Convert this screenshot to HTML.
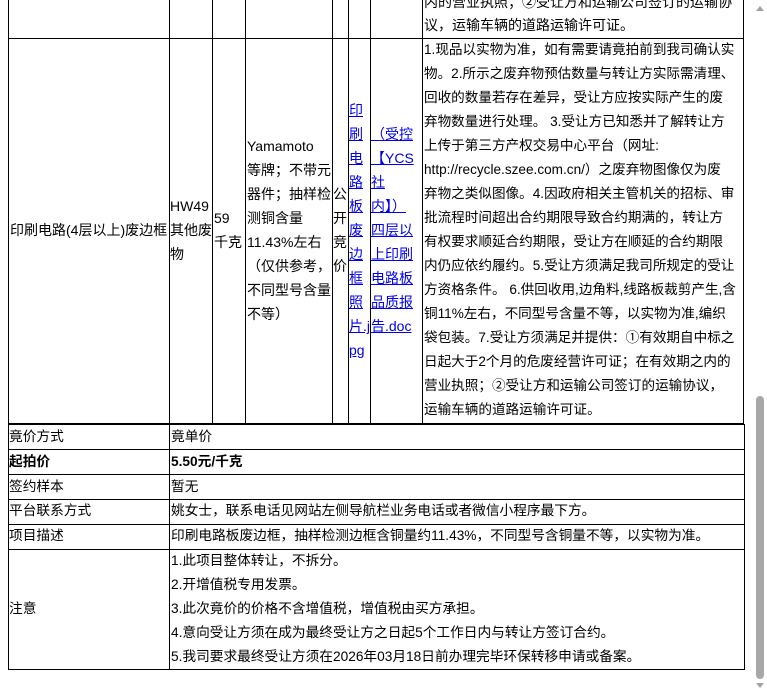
<!DOCTYPE html>
<html><head><meta charset="utf-8"><style>
body{margin:0;width:767px;height:693px;overflow:hidden;background:#fff;position:relative;font-family:"Liberation Sans","Noto Sans CJK SC",sans-serif;color:#000}
.h{position:absolute;height:1px;background:#000}
.v{position:absolute;width:1px;background:#000}
.t{position:absolute;font-size:14px;line-height:24px;white-space:nowrap}
.s{position:absolute;font-size:13.7px;line-height:24px;white-space:nowrap}
a{color:#00e;text-decoration:underline}
</style></head><body>
<div class="v" style="left:8px;top:0;height:425px"></div>
<div class="v" style="left:169px;top:0;height:425px"></div>
<div class="v" style="left:212px;top:0;height:424px"></div>
<div class="v" style="left:245px;top:0;height:424px"></div>
<div class="v" style="left:332px;top:0;height:424px"></div>
<div class="v" style="left:348px;top:0;height:424px"></div>
<div class="v" style="left:370px;top:0;height:424px"></div>
<div class="v" style="left:422px;top:0;height:424px"></div>
<div class="v" style="left:743px;top:0;height:424px"></div>
<div class="h" style="left:8px;top:38px;width:736px"></div>
<div class="h" style="left:8px;top:423px;width:736px;height:2px"></div>

<div class="t" style="left:424px;top:-10px">内的营业执照；②受让方和运输公司签订的运输协</div>
<div class="t" style="left:424px;top:13px">议，运输车辆的道路运输许可证。</div>

<div class="t" style="left:10px;top:218px">印刷电路(4层以上)废边框</div>
<div class="t" style="left:170px;top:194px">HW49</div>
<div class="t" style="left:170px;top:218px">其他废</div>
<div class="t" style="left:170px;top:242px">物</div>
<div class="t" style="left:214px;top:206px">59</div>
<div class="t" style="left:214px;top:230px">千克</div>
<div class="t" style="left:247px;top:134px;line-height:24px">Yamamoto<br>等牌；不带元<br>器件；抽样检<br>测铜含量<br>11.43%左右<br>（仅供参考，<br>不同型号含量<br>不等）</div>
<div class="t" style="left:333px;top:182px">公<br>开<br>竞<br>价</div>
<div class="t" style="left:349px;top:98px"><a>印<br>刷<br>电<br>路<br>板<br>废<br>边<br>框<br>照<br>片.j<br>pg</a></div>
<div class="t" style="left:371px;top:122px"><a>（受控<br>【YCS<br>社<br>内】）<br>四层以<br>上印刷<br>电路板<br>品质报<br>告.doc</a></div>
<div class="t" style="left:424px;top:38px;width:318px;white-space:normal;font-size:13.6px">1.现品以实物为准，如有需要请竟拍前到我司确认实<br>物。2.所示之废弃物预估数量与转让方实际需清理、<br>回收的数量若存在差异，受让方应按实际产生的废<br>弃物数量进行处理。 3.受让方已知悉并了解转让方<br>上传于第三方产权交易中心平台（网址:<br>http://recycle.szee.com.cn/）之废弃物图像仅为废<br>弃物之类似图像。4.因政府相关主管机关的招标、审<br>批流程时间超出合约期限导致合约期满的，转让方<br>有权要求顺延合约期限，受让方在顺延的合约期限<br>内仍应依约履约。5.受让方须满足我司所规定的受让<br>方资格条件。 6.供回收用,边角料,线路板裁剪产生,含<br>铜11%左右，不同型号含量不等，以实物为准,编织<br>袋包装。7.受让方须满足并提供：①有效期自中标之<br>日起大于2个月的危废经营许可证；在有效期之内的<br>营业执照；②受让方和运输公司签订的运输协议，<br>运输车辆的道路运输许可证。</div>

<div class="v" style="left:8px;top:424px;height:246px"></div>
<div class="v" style="left:169px;top:424px;height:246px"></div>
<div class="v" style="left:744px;top:424px;height:246px"></div>
<div class="h" style="left:8px;top:449px;width:737px"></div>
<div class="h" style="left:8px;top:474px;width:737px"></div>
<div class="h" style="left:8px;top:499px;width:737px"></div>
<div class="h" style="left:8px;top:524px;width:737px"></div>
<div class="h" style="left:8px;top:549px;width:737px"></div>
<div class="h" style="left:8px;top:669px;width:737px"></div>

<div class="s" style="left:9px;top:425px">竟价方式</div>
<div class="s" style="left:171px;top:425px">竟单价</div>
<div class="s" style="left:9px;top:450px;font-weight:bold">起拍价</div>
<div class="s" style="left:171px;top:450px;font-weight:bold">5.50元/千克</div>
<div class="s" style="left:9px;top:475px">签约样本</div>
<div class="s" style="left:171px;top:475px">暂无</div>
<div class="s" style="left:9px;top:499px">平台联系方式</div>
<div class="s" style="left:171px;top:499px">姚女士，联系电话见网站左侧导航栏业务电话或者微信小程序最下方。</div>
<div class="s" style="left:9px;top:524px">项目描述</div>
<div class="s" style="left:171px;top:524px">印刷电路板废边框，抽样检测边框含铜量约11.43%，不同型号含铜量不等，以实物为准。</div>
<div class="s" style="left:9px;top:597px">注意</div>
<div class="s" style="left:171px;top:549px">1.此项目整体转让，不拆分。<br>2.开增值税专用发票。<br>3.此次竟价的价格不含增值税，增值税由买方承担。<br>4.意向受让方须在成为最终受让方之日起5个工作日内与转让方签订合约。<br>5.我司要求最终受让方须在2026年03月18日前办理完毕环保转移申请或备案。</div>

<div style="position:absolute;left:753px;top:0;width:14px;height:693px;background:#fff"></div>
<div style="position:absolute;left:756px;top:6px;width:0;height:0;border-left:4px solid transparent;border-right:4px solid transparent;border-bottom:5px solid #a3a3a3"></div>
<div style="position:absolute;left:756px;top:396px;width:8px;height:283px;background:#a8a8a8;border-radius:4px"></div>
<div style="position:absolute;left:756px;top:683px;width:0;height:0;border-left:4px solid transparent;border-right:4px solid transparent;border-top:5px solid #a3a3a3"></div>
</body></html>
